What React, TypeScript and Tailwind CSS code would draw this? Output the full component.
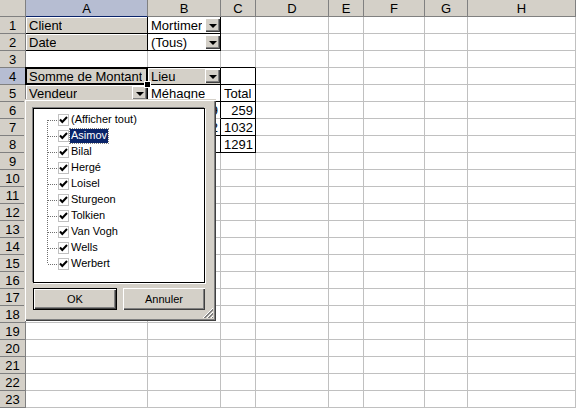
import React from "react";

type Spec = {
  text?: string;
  field?: boolean;
  arrow?: boolean;
  right?: boolean;
  darkR?: boolean;
  darkB?: boolean;
  active?: boolean;
};

const COLS = ["A", "B", "C", "D", "E", "F", "G", "H"];

// sheet content, keyed "A1" etc.
const SHEET: Record<string, Spec> = {
  A1: { text: "Client", field: true, darkR: true, darkB: true },
  B1: { text: "Mortimer", arrow: true, darkR: true, darkB: true },
  A2: { text: "Date", field: true, darkR: true, darkB: true },
  B2: { text: "(Tous)", arrow: true, darkR: true, darkB: true },
  B3: { darkB: true },
  C3: { darkB: true },
  A4: { text: "Somme de Montant", field: true, darkR: true, darkB: true, active: true },
  B4: { text: "Lieu", field: true, arrow: true, darkR: true, darkB: true },
  C4: { darkR: true, darkB: true },
  A5: { text: "Vendeur", field: true, arrow: true, darkR: true, darkB: true },
  B5: { text: "Méhagne", darkR: true, darkB: true },
  C5: { text: "Total", darkR: true, darkB: true },
  A6: { text: "Asimov", darkR: true },
  B6: { text: "259", right: true, darkR: true },
  C6: { text: "259", right: true, darkR: true, darkB: true },
  A7: { text: "Bilal", darkR: true, darkB: true },
  B7: { text: "1032", right: true, darkR: true, darkB: true },
  C7: { text: "1032", right: true, darkR: true, darkB: true },
  A8: { text: "Total", darkR: true, darkB: true },
  B8: { darkR: true, darkB: true },
  C8: { text: "1291", right: true, darkR: true, darkB: true },
};

const VENDEURS = [
  "(Afficher tout)",
  "Asimov",
  "Bilal",
  "Hergé",
  "Loisel",
  "Sturgeon",
  "Tolkien",
  "Van Vogh",
  "Wells",
  "Werbert",
];

function DropArrow() {
  return (
    <span className="ml-auto mr-[-2px] mb-[1px] w-[15px] h-[14px] shrink-0 flex items-center justify-center bg-[#d4d0c8] shadow-[inset_1px_1px_0_#fff,inset_-1px_-1px_0_#404040,inset_-2px_-2px_0_#808080]">
      <span className="w-0 h-0 border-l-[4px] border-r-[4px] border-t-[4px] border-l-transparent border-r-transparent border-t-black mt-[1px]" />
    </span>
  );
}

function Cell({ spec }: { spec?: Spec }) {
  const s = spec ?? {};
  return (
    <div
      className={
        "relative h-[17px] border-r border-b flex items-end overflow-visible whitespace-nowrap text-[13px] leading-[14px] pl-[3px] pr-[2px] " +
        (s.darkR ? "border-r-black " : "border-r-[#c0c0c0] ") +
        (s.darkB ? "border-b-black " : "border-b-[#c0c0c0] ") +
        (s.field ? "bg-[#d4d0c8] shadow-[inset_1px_1px_0_#fff] " : "bg-white ") +
        (s.right ? "justify-end" : "")
      }
    >
      {s.text && <span className="overflow-hidden">{s.text}</span>}
      {s.arrow && <DropArrow />}
      {s.active && (
        <>
          <span className="absolute -left-[1px] -top-[1px] -right-[1px] -bottom-[1px] border-2 border-black pointer-events-none" />
          <span className="absolute -right-[4px] -bottom-[4px] w-[7px] h-[7px] bg-black border border-white z-10" />
        </>
      )}
    </div>
  );
}

function TreeItem({ label, first, last, selected }: { label: string; first: boolean; last: boolean; selected: boolean }) {
  return (
    <div className="flex items-center h-[16px]">
      <svg width="24" height="16" className="shrink-0">
        <line x1="13.5" y1={first ? 8 : 0} x2="13.5" y2={last ? 8 : 16} stroke="#6f6f6f" strokeDasharray="1 1" />
        <line x1="14" y1="8.5" x2="24" y2="8.5" stroke="#6f6f6f" strokeDasharray="1 1" />
      </svg>
      <svg width="11" height="12" className="shrink-0">
        <rect x="0.5" y="0.5" width="10" height="11" fill="#fff" stroke="#808080" strokeDasharray="1 1" />
        <path d="M2 5.5 L4.3 8 L9 3" fill="none" stroke="#000" strokeWidth="2" />
      </svg>
      <span
        className={
          "ml-[1px] px-[1px] h-[14px] leading-[13px] text-[11px] " +
          (selected ? "bg-[#0a246a] text-white outline outline-1 outline-dotted outline-[#808080]" : "text-black")
        }
      >
        {label}
      </span>
    </div>
  );
}

function FieldPopup() {
  return (
    <div className="absolute left-[24px] top-[99px] w-[192px] h-[222px] bg-[#d4d0c8] pl-[9px] pt-[9px] pr-[11px] shadow-[inset_1px_1px_0_#d4d0c8,inset_2px_2px_0_#fff,inset_-1px_-1px_0_#404040,inset_-2px_-2px_0_#808080] z-20">
      <div className="w-[172px] h-[175px] bg-white border border-black shadow-[-1px_-1px_0_#808080,1px_1px_0_#fff] pt-[3px] overflow-hidden">
        {VENDEURS.map((v, i) => (
          <TreeItem key={v} label={v} first={i === 0} last={i === VENDEURS.length - 1} selected={v === "Asimov"} />
        ))}
      </div>
      <div className="flex gap-[6px] mt-[5px]">
        <button className="w-[84px] h-[22px] border border-black bg-[#d4d0c8] text-[11px] text-black shadow-[inset_1px_1px_0_#fff,inset_-1px_-1px_0_#404040,inset_-2px_-2px_0_#808080]">
          OK
        </button>
        <button className="w-[82px] h-[22px] bg-[#d4d0c8] text-[11px] text-black shadow-[inset_1px_1px_0_#fff,inset_-1px_-1px_0_#404040,inset_-2px_-2px_0_#808080]">
          Annuler
        </button>
      </div>
      {/* resize grip */}
      <svg width="12" height="12" className="absolute right-[2px] bottom-[2px]">
        <line x1="11" y1="1" x2="1" y2="11" stroke="#fff" />
        <line x1="11" y1="2" x2="2" y2="11" stroke="#808080" />
        <line x1="11" y1="3" x2="3" y2="11" stroke="#808080" />
        <line x1="11" y1="5" x2="5" y2="11" stroke="#fff" />
        <line x1="11" y1="6" x2="6" y2="11" stroke="#808080" />
        <line x1="11" y1="7" x2="7" y2="11" stroke="#808080" />
        <line x1="11" y1="9" x2="9" y2="11" stroke="#fff" />
        <line x1="11" y1="10" x2="10" y2="11" stroke="#808080" />
      </svg>
    </div>
  );
}

export default function App() {
  const rows = Array.from({ length: 23 }, (_, i) => i + 1);
  return (
    <div className="relative w-[576px] h-[409px] overflow-hidden bg-white text-black font-['Liberation_Sans',Arial,sans-serif]">
      <div className="grid grid-cols-[26px_122px_73px_35px_73px_35px_61px_43px_108px] auto-rows-[17px]">
        {/* column headers */}
        <div className="bg-[#d4d0c8] border-r border-b border-[#808080]" />
        {COLS.map((c) => (
          <div
            key={c}
            className={
              "flex items-end justify-center text-[13px] leading-[14px] border-r border-b " +
              (c === "A" ? "bg-[#b6bdd2] border-r-[#808080] border-b-[#0a246a]" : "bg-[#d4d0c8] border-[#808080]")
            }
          >
            {c}
          </div>
        ))}

        {rows.map((r) => (
          <React.Fragment key={r}>
            <div
              className={
                "flex items-end justify-center text-[13px] leading-[14px] border-r border-b " +
                (r === 4 ? "bg-[#b6bdd2] border-r-[#0a246a] border-b-[#808080]" : "bg-[#d4d0c8] border-[#808080]")
              }
            >
              {r}
            </div>
            {COLS.map((c) => (
              <Cell key={c} spec={SHEET[c + r]} />
            ))}
          </React.Fragment>
        ))}
      </div>

      <FieldPopup />
    </div>
  );
}
